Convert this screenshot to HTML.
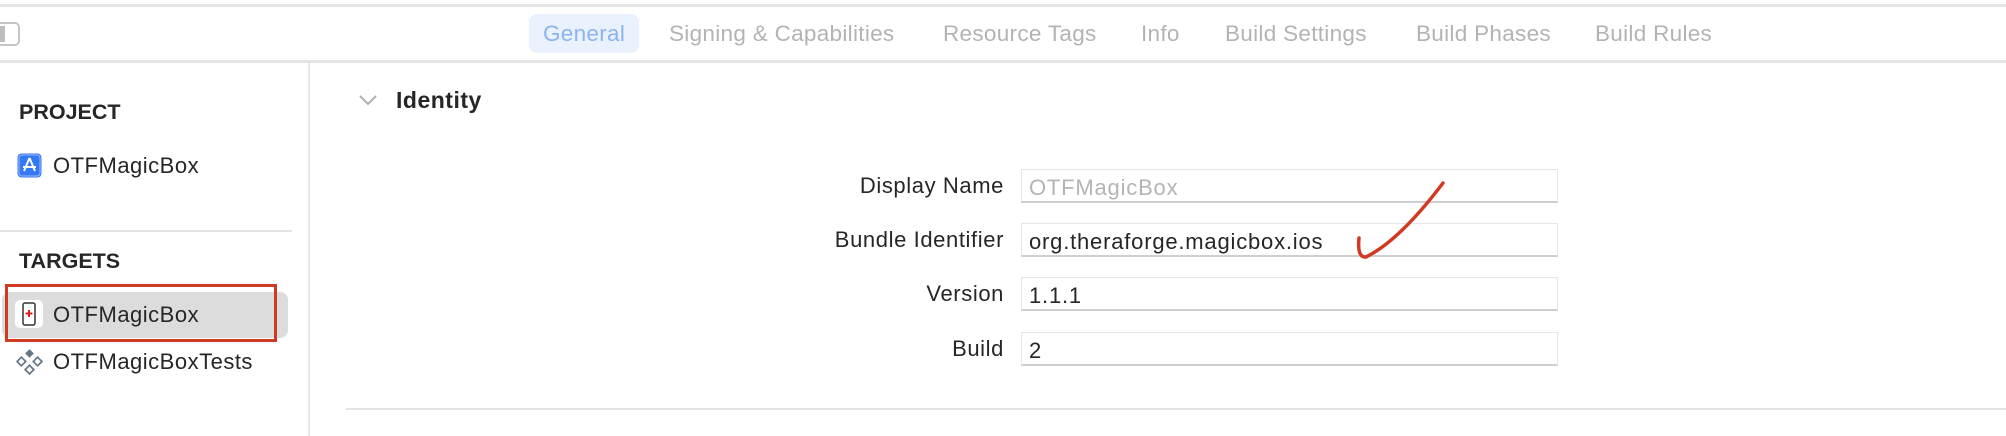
<!DOCTYPE html>
<html><head><meta charset="utf-8"><style>
*{margin:0;padding:0;box-sizing:border-box}
body{width:2006px;height:436px;background:#fff;position:relative;overflow:hidden;font-family:"Liberation Sans",sans-serif;color:#262626}
.a{position:absolute;white-space:nowrap}
.hl{position:absolute;left:0;width:2006px;height:3px;background:#e4e4e4}
.tab{position:absolute;top:21px;font-size:22.5px;letter-spacing:0.3px;color:#b3b3b3}
.lbl{position:absolute;right:1002px;font-size:22px;letter-spacing:0.6px;color:#262626}
.fld{position:absolute;left:1021px;width:537px;height:34px;border:1px solid #e6e6e6;border-bottom:2px solid #cfcfcf;font-size:22px;letter-spacing:0.8px;padding:5px 0 0 7px;color:#262626}
.sb{font-size:22px;letter-spacing:0.5px}
</style></head><body>
<div class="hl" style="top:4px"></div>
<div class="hl" style="top:60px"></div>
<div class="a" style="left:-6px;top:22px;width:26px;height:24px;border:2px solid #c4c4c4;border-radius:5px"></div>
<div class="a" style="left:0;top:26px;width:5px;height:16px;background:#bdbdbd"></div>

<div class="a" style="left:529px;top:14px;width:110px;height:39px;background:#e9f1fd;border-radius:8px"></div>
<div class="tab" style="left:543px;color:#8cb4f0">General</div>
<div class="tab" style="left:669px">Signing &amp; Capabilities</div>
<div class="tab" style="left:943px">Resource Tags</div>
<div class="tab" style="left:1141px">Info</div>
<div class="tab" style="left:1225px">Build Settings</div>
<div class="tab" style="left:1416px">Build Phases</div>
<div class="tab" style="left:1595px">Build Rules</div>

<div class="a" style="left:308px;top:62px;width:2px;height:374px;background:#e6e6e6"></div>
<div class="a" style="left:0;top:230px;width:292px;height:2px;background:#e4e4e4"></div>
<div class="a" style="left:19px;top:100px;font-size:21.5px;font-weight:bold">PROJECT</div>
<div class="a" style="left:19px;top:249px;font-size:21.5px;font-weight:bold">TARGETS</div>

<svg class="a" style="left:17px;top:153px" width="25" height="25" viewBox="0 0 25 25"><rect x="0.5" y="0.5" width="24" height="24" rx="4" fill="#3478f6"/><rect x="2" y="2" width="21" height="21" rx="3" fill="none" stroke="#fff" stroke-opacity=".5"/><path d="M12.5 5 L7 18 M12.5 5 L18 18 M6 14 H19" stroke="#fff" stroke-width="2" fill="none"/></svg>
<div class="a sb" style="left:53px;top:153px">OTFMagicBox</div>

<div class="a" style="left:2px;top:292px;width:286px;height:46px;background:#dcdcdc;border-radius:8px"></div>
<div class="a" style="left:5px;top:284px;width:272px;height:58px;border:3px solid #d13a22"></div>
<svg class="a" style="left:15px;top:300px" width="28" height="28" viewBox="0 0 28 28"><rect x="0" y="0" width="28" height="28" rx="5" fill="#fff"/><rect x="8" y="3" width="12" height="22" rx="2" fill="#fff" stroke="#333" stroke-width="1.5"/><path d="M14 10v7M10.5 13.5h7" stroke="#e02020" stroke-width="2"/></svg>
<div class="a sb" style="left:53px;top:302px">OTFMagicBox</div>

<svg class="a" style="left:16px;top:348px" width="27" height="27" viewBox="0 0 25 25"><path d="M12.5 1l4 4-4 4-4-4z" fill="#667788"/><path d="M5 8.5l4 4-4 4-4-4zM20 8.5l4 4-4 4-4-4zM12.5 16l4 4-4 4-4-4z" fill="none" stroke="#667788" stroke-width="1.6"/></svg>
<div class="a sb" style="left:53px;top:349px">OTFMagicBoxTests</div>

<svg class="a" style="left:358px;top:94px" width="20" height="12"><path d="M2 2l8 8 8-8" stroke="#b0b0b0" stroke-width="2" fill="none"/></svg>
<div class="a" style="left:396px;top:87px;font-size:23px;letter-spacing:0.5px;font-weight:bold">Identity</div>

<div class="lbl a" style="top:173px">Display Name</div>
<div class="fld" style="top:169px;color:#b4b4b4">OTFMagicBox</div>
<div class="lbl a" style="top:227px">Bundle Identifier</div>
<div class="fld" style="top:223px">org.theraforge.magicbox.ios</div>
<div class="lbl a" style="top:281px">Version</div>
<div class="fld" style="top:277px">1.1.1</div>
<div class="lbl a" style="top:336px">Build</div>
<div class="fld" style="top:332px">2</div>

<svg class="a" style="left:0;top:0" width="2006" height="436"><path d="M1359 238 Q1357 258 1366 257 Q1400 240 1443 183" stroke="#d13a22" stroke-width="3.5" fill="none" stroke-linecap="round"/></svg>

<div class="a" style="left:346px;top:408px;width:1660px;height:2px;background:#e4e4e4"></div>
</body></html>
